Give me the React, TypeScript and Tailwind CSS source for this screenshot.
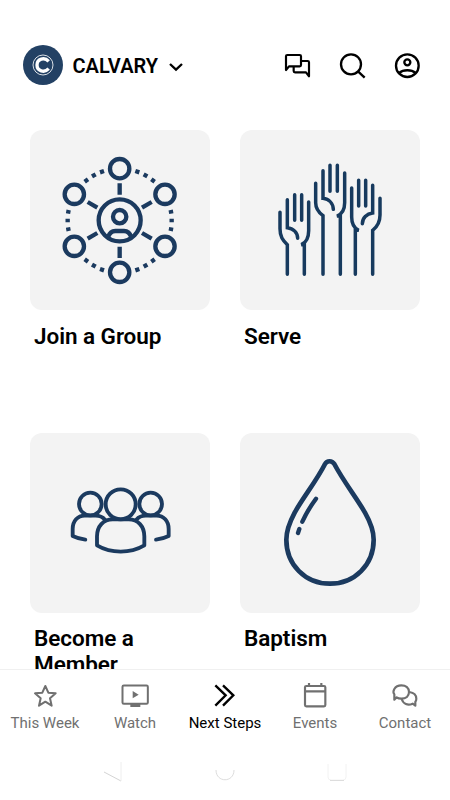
import React from 'react'

const GroupIcon = () => (
    <svg viewBox="-60 -45 540 540" className="size-full" fill="none" stroke="#1b3a5f" strokeWidth="13">
        <circle cx="209" cy="71" r="29" />
        <circle cx="345" cy="148" r="29" />
        <circle cx="345" cy="304" r="29" />
        <circle cx="209" cy="382" r="29" />
        <circle cx="73" cy="304" r="29" />
        <circle cx="73" cy="148" r="29" />
        <circle cx="209" cy="226" r="63" />
        <circle cx="209" cy="215" r="20" />
        <path d="M174 277C178 264 186 258 196 258H222C232 258 240 264 244 277" />
        <path d="M209 115V149M209 305V339M113 171L142 188M305 171L276 188M113 281L142 264M305 281L276 264" />
        <g strokeWidth="13">
            <path d="M104 110l10 -7M126 94l11 -6M150 82l12 -4M256 78l12 4M281 88l11 6M304 103l10 7" />
            <path d="M104 343l10 7M126 359l11 6M150 372l12 4M256 376l12 -4M281 365l11 -6M304 350l10 -7" />
            <path d="M56 195l-2 11M53 221v11M54 247l2 11M362 195l2 11M365 221v11M364 247l-2 11" />
        </g>
    </svg>
)

const HandsIcon = () => (
    <svg viewBox="-75 -60 540 540" className="size-full" fill="none" stroke="#173a5e" strokeWidth="10.500" strokeLinecap="round">
        <path d="M45 187V236C45 260 53 271 67 284V373M67 149V233C85 235 98 248 98 265M89 134V211M110 134V211M131 156V242C131 262 124 277 109 284H118V373" />
        <path d="M152 100V158C152 175 161 187 174 197V373M174 62V145C192 147 204 160 205 178M195 46V124M217 46V124M239 69V158C239 177 231 192 216 198H226V373" />
        <path d="M345 145V195C345 216 337 230 323 241V373M323 106V189C305 191 292 204 292 221M302 91V168M281 91V168M260 114V201C260 219 266 234 281 241H271V373" />
    </svg>
)

const MembersIcon = () => (
    <svg viewBox="-90 -126 540 540" className="size-full" fill="none" stroke="#1b3a5f" strokeWidth="11.500" strokeLinecap="round" strokeLinejoin="round">
        <circle cx="182" cy="88" r="45" />
        <circle cx="91" cy="87" r="34" />
        <circle cx="272" cy="87" r="34" />
        <path d="M111 211V184C111 154 130 133 158 133H206C234 133 253 154 253 184V211C211 236 153 236 111 211Z" />
        <path d="M76 194C61 192 48 188 38 183V162C38 138 53 122 74 122H107C119 122 128 126 135 134" />
        <path d="M288 194C303 192 316 188 326 183V162C326 138 311 122 290 122H257C245 122 236 126 229 134" />
    </svg>
)

const DropIcon = () => (
    <svg viewBox="-90 -36 540 540" className="size-full" fill="none" stroke="#1b3a5f" strokeWidth="14" strokeLinecap="round">
        <path d="M165 57C171 46 186 46 193 57C219 107 262 162 285 203C303 235 311 258 311 284C311 359 254 416 180 416C106 416 49 359 49 284C49 258 57 235 74 203C96 162 140 107 165 57Z" />
        <path strokeWidth="13" d="M138 161C121 184 108 206 97 230M88 252L84 264" />
    </svg>
)

const cards = [
    { title: 'Join a Group', Icon: GroupIcon },
    { title: 'Serve', Icon: HandsIcon },
    { title: 'Become a Member', Icon: MembersIcon },
    { title: 'Baptism', Icon: DropIcon },
]

const StarIcon = () => (
    <svg viewBox="0 0 84 78" className="w-7 h-[26px]" fill="none" stroke="currentColor" strokeWidth="6" strokeLinejoin="round">
        <path d="M43 9L52 29L74 31L57 46L62 68L43 56L24 68L29 46L12 31L34 29Z" />
    </svg>
)

const WatchIcon = () => (
    <svg viewBox="0 0 84 78" className="w-7 h-[26px]" fill="none" stroke="currentColor" strokeWidth="6">
        <rect x="4.500" y="7.500" width="76" height="55" rx="4" />
        <path d="M28 67H58" strokeWidth="10" />
        <path d="M35 24L53 35L35 46Z" fill="currentColor" stroke="none" />
    </svg>
)

const StepsIcon = () => (
    <svg viewBox="0 0 84 78" className="w-7 h-[26px]" fill="none" stroke="currentColor" strokeWidth="7">
        <path d="M13 7L44 37L13 68M36 7L67 37L36 68" />
    </svg>
)

const EventsIcon = () => (
    <svg viewBox="0 0 84 78" className="w-7 h-[26px]" fill="none" stroke="currentColor" strokeWidth="6.500">
        <rect x="12" y="9" width="61" height="61" rx="4" />
        <path d="M12 25H73M24 0V10M61 0V10" />
    </svg>
)

const ContactIcon = () => (
    <svg viewBox="0 0 84 78" className="w-7 h-[26px]" fill="none" stroke="currentColor" strokeWidth="6.500" strokeLinejoin="round">
        <path d="M31 7C45 7 54 15 54 27C54 39 45 47 31 47C26 47 21 46 17 43L10 50V34C7 30 7 23 10 18C14 11 21 7 31 7Z" />
        <path d="M55 27C68 29 76 37 76 47C76 51 75 54 73 56V68L65 62C50 69 37 63 32 48" />
    </svg>
)

const tabs = [
    { name: 'This Week', Icon: StarIcon },
    { name: 'Watch', Icon: WatchIcon },
    { name: 'Next Steps', Icon: StepsIcon, active: true },
    { name: 'Events', Icon: EventsIcon },
    { name: 'Contact', Icon: ContactIcon },
]

const Header = () => (
    <header className="h-[130px] shrink-0 flex items-center pl-[22.5px] pr-7">
        <div className="size-10 rounded-full bg-[#234164] flex items-center justify-center">
            <svg viewBox="0 0 66 66" className="size-[22px]" fill="none" stroke="white">
                <circle cx="33" cy="33" r="30" strokeWidth="2.500" />
                <path d="M50 22C37 8 15 15 15 33S37 58 50 44" strokeWidth="10" />
            </svg>
        </div>
        <h1 className="mt-px ml-2.5 text-[20px] font-semibold">CALVARY</h1>
        <svg viewBox="0 0 42 30" className="mt-[3px] ml-[11px] w-3.5 h-2.5" fill="none" stroke="black" strokeWidth="7">
            <path d="M3 6L21 23L39 6" />
        </svg>
        <div className="mt-[3px] ml-auto flex items-center gap-[27px] text-black">
            <svg viewBox="0 0 84 84" className="size-7" fill="none" stroke="currentColor" strokeWidth="6.500" strokeLinejoin="round">
                <path d="M6 51V10Q6 6 10 6H47Q51 6 51 10V36Q51 40 47 40H15Z" />
                <path d="M53 24H71Q75 24 75 28V70L66 58H33Q29 58 29 54V42" />
            </svg>
            <svg viewBox="0 0 84 84" className="size-7" fill="none" stroke="currentColor" strokeWidth="7">
                <circle cx="36" cy="34" r="30" />
                <path d="M57 55L77 74" />
            </svg>
            <svg viewBox="0 0 84 84" className="size-7" fill="none" stroke="currentColor" strokeWidth="7">
                <circle cx="40" cy="38" r="34" />
                <circle cx="40" cy="28" r="9" />
                <path d="M15 60C28 49 52 49 65 60" />
            </svg>
        </div>
    </header>
)

const TabBar = () => (
    <nav className="h-[131px] shrink-0 border-t border-[#f0f0f0] bg-white">
        <div className="grid grid-cols-5 pt-[13px]">
            {tabs.map(({ name, Icon, active }) => (
                <div key={name} className={`flex flex-col items-center ${active ? 'text-black' : 'text-[#707070]'}`}>
                    <Icon />
                    <span className="mt-1 text-[15px] leading-5 whitespace-nowrap">{name}</span>
                </div>
            ))}
        </div>
        {/* faint system navigation keys */}
        <div className="mt-[27px] flex justify-center gap-[92px] pr-px">
            <svg viewBox="0 0 20 24" className="w-5 h-6" fill="none" stroke="#d4d4d4">
                <path d="M1 12L18 21" />
                <path d="M18 2V21" stroke="#eeeeee" />
            </svg>
            <svg viewBox="0 0 20 24" className="w-5 h-6" fill="none" stroke="#dddddd">
                <path d="M1 10C1 23 19 23 19 10" />
            </svg>
            <svg viewBox="0 0 20 24" className="w-5 h-6" fill="none" stroke="#dddddd">
                <path d="M1 4V17Q1 20 4 20H16Q19 20 19 17V4" stroke="#f2f2f2" />
                <path d="M3 20.500H17" />
            </svg>
        </div>
    </nav>
)

const App = () => {
    return (
        <div className="w-[450px] h-[800px] overflow-hidden bg-white text-black flex flex-col font-[Roboto,sans-serif]">
            <Header />
            <main className="flex-1 min-h-0 overflow-hidden">
                <div className="grid grid-cols-2 gap-x-[30px] px-[30px] auto-rows-[302.5px]">
                    {cards.map(({ title, Icon }) => (
                        <div key={title}>
                            <div className="size-[180px] rounded-xl bg-[#f3f3f3]">
                                <Icon />
                            </div>
                            <h2 className="mt-[12.9px] px-1 w-[150px] text-[22.5px] leading-[26px] font-semibold tracking-[-0.05px]">{title}</h2>
                        </div>
                    ))}
                </div>
            </main>
            <TabBar />
        </div>
    )
}

export default App
